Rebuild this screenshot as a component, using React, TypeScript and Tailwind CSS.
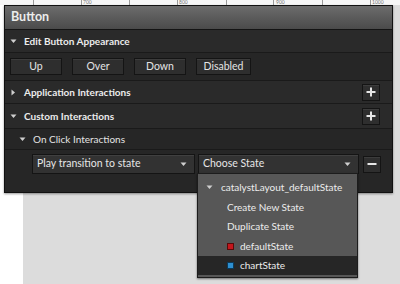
import { FunctionComponent } from "react";

const font = { fontFamily: "Lato, 'Open Sans', sans-serif" };

const ticks = [33, 81, 129, 177, 226, 273, 322, 370];
const labels = [
    { x: 83, t: "700" },
    { x: 179, t: "800" },
    { x: 276, t: "900" },
    { x: 372, t: "1000" },
];

const TriDown = ({ className = "" }: { className?: string }) => (
    <svg width="7" height="5" viewBox="0 0 7 5" className={className}>
        <path d="M0.5 0.5 L6.5 0.5 L3.5 4 Z" fill="#cfcfcf" />
    </svg>
);

const TriRight = ({ className = "" }: { className?: string }) => (
    <svg width="5" height="7" viewBox="0 0 5 7" className={className}>
        <path d="M0.5 0.5 L4 3.5 L0.5 6.5 Z" fill="#cfcfcf" />
    </svg>
);

const SmallButton = ({ label, w }: { label: string; w: string }) => (
    <div className={`${w} h-[17px] flex items-center justify-center bg-[#2e2e2e] border border-[#141414] shadow-[inset_0_1px_0_#3c3c3c] text-[10.5px] text-[#e4e4e4]`}>
        {label}
    </div>
);

const IconButton = ({ sign }: { sign: "+" | "-" }) => (
    <div className="w-[18px] h-[17px] flex items-center justify-center bg-[#2e2e2e] border border-[#141414] shadow-[inset_0_1px_0_#3c3c3c]">
        <svg width="10" height="10" viewBox="0 0 10 10">
            <rect x="0.5" y="4" width="9" height="2" fill="#e6e6e6" />
            {sign === "+" && <rect x="4" y="0.5" width="2" height="9" fill="#e6e6e6" />}
        </svg>
    </div>
);

const Select = ({ label, w }: { label: string; w: string }) => (
    <div className={`${w} h-[20px] flex items-center justify-between pl-[4px] pr-[7px] bg-[#323232] border border-[#141414] shadow-[inset_0_1px_0_#404040] text-[10.5px] text-[#e6e6e6]`}>
        <span>{label}</span>
        <TriDown />
    </div>
);

const App: FunctionComponent = () => {
    return (
        <div className="relative w-[400px] h-[284px] bg-white overflow-hidden" style={font}>
            {/* ruler */}
            <div className="relative h-[5px] bg-[#f6f6f6]">
                {ticks.map((x) => (
                    <div key={x} className="absolute top-0 h-[5px] w-px bg-[#9a9a9a]" style={{ left: x }} />
                ))}
                {labels.map((l) => (
                    <div key={l.t} className="absolute top-0 text-[5px] leading-[5px] text-[#777]" style={{ left: l.x }}>
                        {l.t}
                    </div>
                ))}
            </div>

            {/* canvas */}
            <div className="ml-[23px] h-[279px] bg-[#dcdcdc]" />

            {/* panel */}
            <div className="absolute left-[4px] top-[5px] w-[389px] h-[188px] bg-[#262626] border border-[#111] shadow-[0_1px_2px_rgba(0,0,0,0.4)] flex flex-col">
                <div className="h-[24px] flex items-center pl-[6px] bg-gradient-to-b from-[#6c6c6c] to-[#4b4b4b] border-b border-[#141414] text-[12.5px] font-bold text-[#ececec]">
                    Button
                </div>

                <div className="h-[23px] flex items-center pl-[5px] gap-[7px] bg-[#2a2a2a] border-b border-[#1a1a1a] text-[10px] font-bold text-[#ececec]">
                    <TriDown />
                    <span>Edit Button Appearance</span>
                </div>

                <div className="h-[28px] flex items-center pl-[5px] gap-[10px] border-b border-[#1a1a1a]">
                    <SmallButton label="Up" w="w-[52px]" />
                    <SmallButton label="Over" w="w-[52px]" />
                    <SmallButton label="Down" w="w-[52px]" />
                    <SmallButton label="Disabled" w="w-[55px]" />
                </div>

                <div className="h-[23px] flex items-center justify-between pl-[6px] pr-[12px] bg-[#2a2a2a] border-b border-[#1a1a1a]">
                    <div className="flex items-center gap-[8px] text-[10px] font-bold text-[#ececec]">
                        <TriRight />
                        <span>Application Interactions</span>
                    </div>
                    <IconButton sign="+" />
                </div>

                <div className="h-[25px] flex items-center justify-between pl-[5px] pr-[12px] bg-[#2a2a2a] border-b border-[#1a1a1a]">
                    <div className="flex items-center gap-[7px] text-[10px] font-bold text-[#ececec]">
                        <TriDown />
                        <span>Custom Interactions</span>
                    </div>
                    <IconButton sign="+" />
                </div>

                <div className="h-[21px] flex items-center pl-[14px] gap-[7px] border-b border-[#1a1a1a] text-[10px] text-[#e4e4e4]">
                    <TriDown />
                    <span>On Click Interactions</span>
                </div>

                <div className="flex items-center pt-[4px] pl-[27px] gap-[3px]">
                    <Select label="Play transition to state" w="w-[163px]" />
                    <Select label="Choose State" w="w-[161px]" />
                    <div className="ml-[1px]">
                        <IconButton sign="-" />
                    </div>
                </div>
            </div>

            {/* dropdown menu */}
            <div className="absolute left-[197px] top-[173px] w-[161px] h-[105px] bg-[#575757] border border-[#1c1c1c] shadow-[0_1px_2px_rgba(0,0,0,0.5)] text-[10px] text-[#ececec] flex flex-col pt-[4px]">
                <div className="h-[19px] flex items-center pl-[8px] gap-[8px]">
                    <TriDown />
                    <span>catalystLayout_defaultState</span>
                </div>
                <div className="h-[20px] flex items-center pl-[29px]">Create New State</div>
                <div className="h-[19px] flex items-center pl-[29px]">Duplicate State</div>
                <div className="h-[20px] flex items-center pl-[29px] gap-[6px]">
                    <div className="w-[7px] h-[7px] bg-[#c4161c] border border-[#5a0a0a]" />
                    <span>defaultState</span>
                </div>
                <div className="h-[19px] flex items-center pl-[29px] gap-[6px] bg-[#262626]">
                    <div className="w-[7px] h-[7px] bg-[#2e8fd0] border border-[#0c3a5a]" />
                    <span>chartState</span>
                </div>
            </div>
        </div>
    );
};

export default App;
